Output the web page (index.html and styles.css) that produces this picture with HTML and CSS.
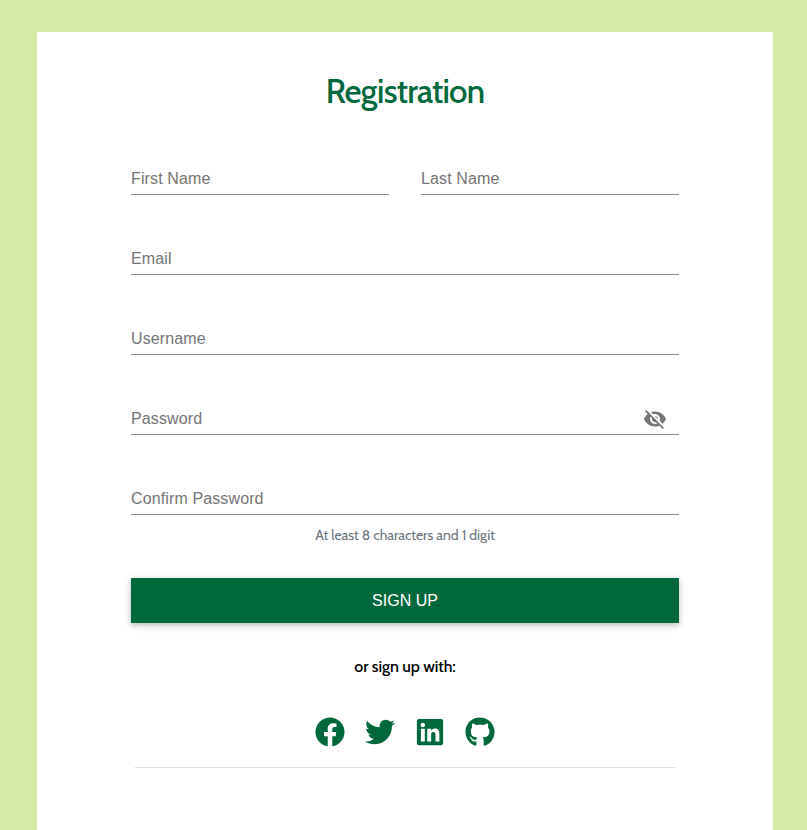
FILE: index.html
```html
<!DOCTYPE html>
<html lang="en">
<head>
<meta charset="utf-8">
<title>Registration</title>
<link rel="stylesheet" href="styles.css">
</head>
<body>
<main class="card">
  <h1 class="title"><span>Registration</span></h1>
  <form class="form">
    <div class="row">
      <label class="field"><span>First Name</span></label>
      <label class="field"><span>Last Name</span></label>
    </div>
    <label class="field"><span>Email</span></label>
    <label class="field"><span>Username</span></label>
    <label class="field"><span>Password</span>
      <svg class="eye" viewBox="0 0 24 24"><path d="M12 7c2.76 0 5 2.24 5 5 0 .65-.13 1.26-.36 1.83l2.92 2.92c1.51-1.26 2.7-2.89 3.43-4.75-1.73-4.39-6-7.5-11-7.5-1.4 0-2.74.25-3.98.7l2.16 2.16C10.74 7.13 11.35 7 12 7zM2 4.27l2.28 2.28.46.46C3.08 8.3 1.78 10.02 1 12c1.73 4.39 6 7.5 11 7.5 1.55 0 3.03-.3 4.38-.84l.42.42L19.73 22 21 20.73 3.27 3 2 4.27zM7.53 9.8l1.55 1.55c-.05.21-.08.43-.08.65 0 1.66 1.34 3 3 3 .22 0 .44-.03.65-.08l1.55 1.55c-.67.33-1.41.53-2.2.53-2.76 0-5-2.24-5-5 0-.79.2-1.53.53-2.2zm4.31-.78l3.15 3.15.02-.16c0-1.66-1.34-3-3-3l-.17.01z"/></svg>
    </label>
    <label class="field"><span>Confirm Password</span></label>
    <p class="hint"><span>At least 8 characters and 1 digit</span></p>
    <button class="submit" type="button">SIGN UP</button>
  </form>
  <p class="alt"><span>or sign up with:</span></p>
  <div class="social">
    <svg viewBox="0 0 512 512"><path d="M504 256C504 119 393 8 256 8S8 119 8 256c0 123.78 90.69 226.38 209.25 245V327.69h-63V256h63v-54.64c0-62.15 37-96.48 93.67-96.48 27.14 0 55.52 4.84 55.52 4.84v61h-31.28c-30.8 0-40.41 19.12-40.41 38.73V256h68.78l-11 71.69h-57.78V501C413.31 482.38 504 379.78 504 256z"/></svg>
    <svg viewBox="0 0 512 512"><path d="M459.37 151.716c.325 4.548.325 9.097.325 13.645 0 138.72-105.583 298.558-298.558 298.558-59.452 0-114.68-17.219-161.137-47.106 8.447.974 16.568 1.299 25.34 1.299 49.055 0 94.213-16.568 130.274-44.832-46.132-.975-84.792-31.188-98.112-72.772 6.498.974 12.995 1.624 19.818 1.624 9.421 0 18.843-1.3 27.614-3.573-48.081-9.747-84.143-51.98-84.143-102.985v-1.299c13.969 7.797 30.214 12.67 47.431 13.319-28.264-18.843-46.781-51.005-46.781-87.391 0-19.492 5.197-37.36 14.294-52.954 51.655 63.675 129.3 105.258 216.365 109.807-1.624-7.797-2.599-15.918-2.599-24.04 0-57.828 46.782-104.934 104.934-104.934 30.213 0 57.502 12.67 76.67 33.137 23.715-4.548 46.456-13.32 66.599-25.34-7.798 24.366-24.366 44.833-46.132 57.827 21.117-2.273 41.584-8.122 60.426-16.243-14.292 20.791-32.161 39.308-52.628 54.253z"/></svg>
    <svg viewBox="-32 0 512 512"><path d="M416 32H31.9C14.3 32 0 46.5 0 64.3v383.4C0 465.5 14.3 480 31.9 480H416c17.6 0 32-14.5 32-32.3V64.3c0-17.8-14.4-32.3-32-32.3zM135.4 416H69V202.2h66.5V416zm-33.2-243c-21.3 0-38.5-17.3-38.5-38.5S80.9 96 102.2 96c21.2 0 38.5 17.3 38.5 38.5 0 21.3-17.2 38.5-38.5 38.5zm282.1 243h-66.4V312c0-24.8-.5-56.7-34.5-56.7-34.6 0-39.9 27-39.9 54.9V416h-66.4V202.2h63.7v29.2h.9c8.9-16.8 30.6-34.5 62.9-34.5 67.2 0 79.7 44.3 79.7 101.9V416z"/></svg>
    <svg viewBox="-8 0 512 512"><path d="M165.9 397.4c0 2-2.3 3.6-5.2 3.6-3.3.3-5.6-1.3-5.6-3.6 0-2 2.3-3.6 5.2-3.6 3-.3 5.6 1.3 5.6 3.6zm-31.1-4.5c-.7 2 1.3 4.3 4.3 4.9 2.6 1 5.6 0 6.2-2s-1.3-4.3-4.3-5.2c-2.6-.7-5.5.3-6.2 2.3zm44.2-1.7c-2.9.7-4.9 2.6-4.6 4.9.3 2 2.9 3.3 5.9 2.6 2.9-.7 4.9-2.6 4.6-4.6-.3-1.9-3-3.2-5.9-2.9zM244.8 8C106.1 8 0 113.3 0 252c0 110.9 69.8 205.8 169.5 239.2 12.8 2.3 17.3-5.6 17.3-12.1 0-6.2-.3-40.4-.3-61.4 0 0-70 15-84.7-29.8 0 0-11.4-29.1-27.8-36.6 0 0-22.9-15.7 1.6-15.4 0 0 24.9 2 38.6 25.8 21.9 38.6 58.6 27.5 72.9 20.9 2.3-16 8.8-27.1 16-33.7-55.9-6.2-112.3-14.3-112.3-110.5 0-27.5 7.6-41.3 23.6-58.9-2.6-6.5-11.1-33.3 2.6-67.9 20.9-6.5 69 27 69 27 20-5.6 41.5-8.5 62.8-8.5s42.8 2.9 62.8 8.5c0 0 48.1-33.6 69-27 13.7 34.7 5.2 61.4 2.6 67.9 16 17.7 25.8 31.5 25.8 58.9 0 96.5-58.9 104.2-114.8 110.5 9.2 7.9 17 22.9 17 46.4 0 33.7-.3 75.4-.3 83.6 0 6.5 4.6 14.4 17.3 12.1C428.2 457.8 496 362.9 496 252 496 113.3 383.5 8 244.8 8zM97.2 352.9c-1.3 1-1 3.3.7 5.2 1.6 1.6 3.9 2.3 5.2 1 1.3-1 1-3.3-.7-5.2-1.6-1.6-3.9-2.3-5.2-1zm-10.8-8.1c-.7 1.3.3 2.9 2.3 3.9 1.6 1 3.6.7 4.3-.7.7-1.3-.3-2.9-2.3-3.9-2-.6-3.6-.3-4.3.7zm32.4 35.6c-1.6 1.3-1 4.3 1.3 6.2 2.3 2.3 5.2 2.6 6.5 1 1.3-1.3.7-4.3-1.3-6.2-2.2-2.3-5.2-2.6-6.5-1zm-11.4-14.7c-1.6 1-1.6 3.6 0 5.9 1.6 2.3 4.3 3.3 5.6 2.3 1.6-1.3 1.6-3.9 0-6.2-1.4-2.3-4-3.3-5.6-2z"/></svg>
  </div>
  <hr class="rule">
</main>
</body>
</html>
```
FILE: styles.css
```css
* { box-sizing: border-box; }
body {
  margin: 0;
  height: 830px;
  overflow: hidden;
  padding: 32px 34px 0 37px;
  background: #d6eaa5;
  font-family: Cabin, Lato, sans-serif;
}
.card {
  height: 798px;
  padding: 0 94px;
  background: #fff;
}
.title {
  margin: 0;
  padding-top: 38px;
  height: 130px;
  font-size: 33px;
  line-height: 42px;
  font-weight: 550;
  letter-spacing: -0.75px;
  text-align: center;
  color: #00693c;
}
.row {
  display: grid;
  grid-template-columns: 1fr 1fr;
  gap: 32px;
}
.field {
  display: flex;
  align-items: center;
  justify-content: space-between;
  height: 33px;
  margin: 0 0 47px;
  padding-right: 12px;
  padding-top: 2px;
  border-bottom: 1px solid #8f8f8f;
  font: 16px/24px "Liberation Sans", sans-serif;
  letter-spacing: 0.12px;
  color: #757575;
  white-space: nowrap;
}
.form { display: flex; flex-direction: column; }
.eye { width: 24px; height: 24px; fill: #757575; }
.hint {
  margin: -39px 0 0;
  height: 55px;
  padding-top: 2px;
  font-size: 14px;
  line-height: 20px;
  font-weight: 450;
  letter-spacing: -0.03px;
  text-align: center;
  color: #6c757d;
}
.submit {
  width: 100%;
  height: 45px;
  padding: 0;
  border: 0;
  background: #00693c;
  color: #fff;
  font: 16px "Liberation Sans", sans-serif;
  box-shadow: 0 2px 5px rgba(0, 0, 0, .2), 0 2px 10px rgba(0, 0, 0, .1);
}
.alt {
  margin: 32px 0 38px;
  font-size: 16px;
  line-height: 24px;
  font-weight: 500;
  letter-spacing: -0.07px;
  text-align: center;
  color: #000;
}
.social {
  display: flex;
  justify-content: center;
  gap: 20px;
}
.social svg { width: 30px; height: 30px; fill: #00693c; }
.rule {
  height: 1px;
  margin: 20px 4px 0;
  border: 0;
  background: #dedede;
}
```
